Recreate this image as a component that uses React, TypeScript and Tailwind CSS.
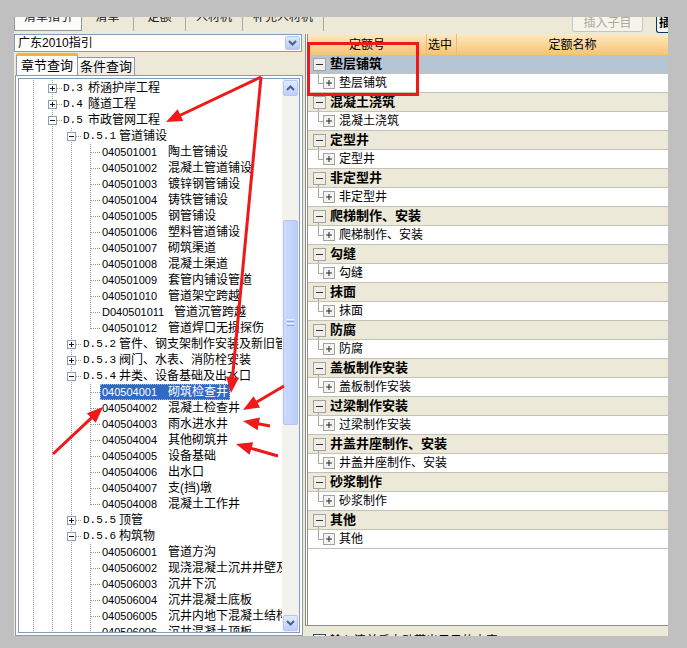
import React from "react";

type Box = "plus" | "minus";

type TreeRow =
  | { kind: "chapter"; prefix: string; name: string; box: Box }
  | { kind: "section"; prefix: string; name: string; box: Box }
  | { kind: "leaf"; code: string; name: string; last?: boolean; selected?: boolean };

const leaves = (items: [string, string][], lastEnds = true): TreeRow[] =>
  items.map(([code, name], i) => ({
    kind: "leaf",
    code,
    name,
    last: lastEnds && i === items.length - 1,
  }));

const TREE: TreeRow[] = [
  { kind: "chapter", prefix: "D.3", name: "桥涵护岸工程", box: "plus" },
  { kind: "chapter", prefix: "D.4", name: "隧道工程", box: "plus" },
  { kind: "chapter", prefix: "D.5", name: "市政管网工程", box: "minus" },
  { kind: "section", prefix: "D.5.1", name: "管道铺设", box: "minus" },
  ...leaves([
    ["040501001", "陶土管铺设"],
    ["040501002", "混凝土管道铺设"],
    ["040501003", "镀锌钢管铺设"],
    ["040501004", "铸铁管铺设"],
    ["040501005", "钢管铺设"],
    ["040501006", "塑料管道铺设"],
    ["040501007", "砌筑渠道"],
    ["040501008", "混凝土渠道"],
    ["040501009", "套管内铺设管道"],
    ["040501010", "管道架空跨越"],
    ["D040501011", "管道沉管跨越"],
    ["040501012", "管道焊口无损探伤"],
  ]),
  { kind: "section", prefix: "D.5.2", name: "管件、钢支架制作安装及新旧管连接", box: "plus" },
  { kind: "section", prefix: "D.5.3", name: "阀门、水表、消防栓安装", box: "plus" },
  { kind: "section", prefix: "D.5.4", name: "井类、设备基础及出水口", box: "minus" },
  { kind: "leaf", code: "040504001", name: "砌筑检查井", selected: true },
  ...leaves([
    ["040504002", "混凝土检查井"],
    ["040504003", "雨水进水井"],
    ["040504004", "其他砌筑井"],
    ["040504005", "设备基础"],
    ["040504006", "出水口"],
    ["040504007", "支(挡)墩"],
    ["040504008", "混凝土工作井"],
  ]),
  { kind: "section", prefix: "D.5.5", name: "顶管", box: "plus" },
  { kind: "section", prefix: "D.5.6", name: "构筑物", box: "minus" },
  ...leaves(
    [
      ["040506001", "管道方沟"],
      ["040506002", "现浇混凝土沉井井壁及隔墙"],
      ["040506003", "沉井下沉"],
      ["040506004", "沉井混凝土底板"],
      ["040506005", "沉井内地下混凝土结构"],
      ["040506006", "沉井混凝土顶板"],
    ],
    false
  ),
];

const GROUPS = [
  "垫层铺筑",
  "混凝土浇筑",
  "定型井",
  "非定型井",
  "爬梯制作、安装",
  "勾缝",
  "抹面",
  "防腐",
  "盖板制作安装",
  "过梁制作安装",
  "井盖井座制作、安装",
  "砂浆制作",
  "其他",
];

const TOP_TABS = [
  { label: "清单指引", w: "w-[68px]" },
  { label: "清单", w: "w-[52px]" },
  { label: "定额", w: "w-[52px]" },
  { label: "人材机", w: "w-[57px]" },
  { label: "补充人材机", w: "w-[81px]" },
];

// red annotation arrows: [fromX, fromY, tipX, tipY]
const ARROWS: [number, number, number, number][] = [
  [261, 77, 166, 122],
  [261, 77, 231, 393],
  [284, 386, 243, 410],
  [270, 426, 243, 421],
  [278, 456, 236, 444],
  [53, 454, 103, 407],
];

// one 19x16 cell of the tree's dotted guide lines
const Guide = ({
  line = "full",
  branch = false,
  box,
}: {
  line?: "full" | "half";
  branch?: boolean;
  box?: Box;
}) => (
  <svg width="19" height="16" className="block shrink-0">
    <line
      x1="9.5"
      y1="0"
      x2="9.5"
      y2={line === "full" ? 16 : 9}
      stroke="#9a9a9a"
      strokeDasharray="1 1"
    />
    {branch && (
      <line x1="10" y1="8.5" x2="19" y2="8.5" stroke="#9a9a9a" strokeDasharray="1 1" />
    )}
    {box && (
      <>
        <rect x="5.5" y="4.5" width="8" height="8" fill="#fff" stroke="#8a9bb0" />
        <line x1="7" y1="8.5" x2="12" y2="8.5" stroke="#1a1a1a" />
        {box === "plus" && <line x1="9.5" y1="6" x2="9.5" y2="11" stroke="#1a1a1a" />}
      </>
    )}
  </svg>
);

const Chevron = ({ up = false }: { up?: boolean }) => (
  <svg width="9" height="6" viewBox="0 0 9 6">
    <polyline
      points={up ? "1,5 4.5,1.5 8,5" : "1,1 4.5,4.5 8,1"}
      fill="none"
      stroke="#4d6185"
      strokeWidth="2"
    />
  </svg>
);

const TreeLine = ({ row }: { row: TreeRow }) => {
  if (row.kind === "chapter") {
    return (
      <div className="flex h-[16px] items-center whitespace-nowrap">
        <Guide />
        <Guide branch box={row.box} />
        <span className="flex h-[16px] items-center px-[1px]">
          <span className="w-[25px] font-['Liberation_Mono'] text-[11px]">{row.prefix}</span>
          <span>{row.name}</span>
        </span>
      </div>
    );
  }
  if (row.kind === "section") {
    return (
      <div className="flex h-[16px] items-center whitespace-nowrap">
        <Guide />
        <Guide />
        <Guide branch box={row.box} />
        <span className="flex h-[16px] items-center px-[2px]">
          <span className="w-[36px] font-['Liberation_Mono'] text-[11px]">{row.prefix}</span>
          <span>{row.name}</span>
        </span>
      </div>
    );
  }
  return (
    <div className="flex h-[16px] items-center whitespace-nowrap">
      <Guide />
      <Guide />
      <Guide />
      <Guide branch line={row.last ? "half" : "full"} />
      <span
        className={`flex h-[16px] items-center px-[2px] ${
          row.selected ? "bg-[#316ac5] text-white outline-1 outline-dotted outline-[#9fb6e0] -outline-offset-1" : ""
        }`}
      >
        <span className={`${row.code.length > 9 ? "w-[72px]" : "w-[66px]"} text-[11px]`}>
          {row.code}
        </span>
        <span>{row.name}</span>
      </span>
    </div>
  );
};

const Arrows = () => (
  <svg
    width="687"
    height="648"
    className="pointer-events-none absolute left-0 top-0"
  >
    <rect x="308.5" y="43.5" width="109" height="51" fill="none" stroke="#f01818" strokeWidth="3" />
    {ARROWS.map(([x1, y1, x2, y2], i) => {
      const dx = x2 - x1;
      const dy = y2 - y1;
      const len = Math.hypot(dx, dy);
      const ux = dx / len;
      const uy = dy / len;
      const bx = x2 - ux * 16;
      const by = y2 - uy * 16;
      const pts = `${x2},${y2} ${bx - uy * 6.5},${by + ux * 6.5} ${bx + uy * 6.5},${by - ux * 6.5}`;
      return (
        <g key={i}>
          <line x1={x1} y1={y1} x2={bx + ux * 2} y2={by + uy * 2} stroke="#f01818" strokeWidth="3" />
          <polygon points={pts} fill="#f01818" />
        </g>
      );
    })}
  </svg>
);

export default function App() {
  return (
    <div className="relative h-[648px] w-[687px] overflow-hidden bg-[#c0c0c0] pl-[14px] pt-[17px] font-['Liberation_Sans','Noto_Sans_CJK_SC',sans-serif] text-[12px] text-black">
      <div className="flex h-[619px] w-[654px] flex-col overflow-hidden bg-[#ece9d8]">
        {/* TOP TABS, cut off by the window edge */}
        <div className="h-[17px] shrink-0 overflow-hidden">
          <div className="-mt-[14px] flex h-[28px] items-stretch">
            {TOP_TABS.map((tab, i) => (
              <div
                key={tab.label}
                className={`${tab.w} flex items-center justify-center text-[12px] text-[#222] ${
                  i === 0
                    ? "border border-t-0 border-[#919b9c] bg-[#fbfbf8]"
                    : "border-r border-[#aca899]"
                }`}
              >
                {tab.label}
              </div>
            ))}
            <div className="flex-1" />
            <div className="mr-[13px] mt-[14px] flex h-[15px] w-[71px] items-start justify-center overflow-hidden rounded-b-[3px] border border-t-0 border-[#c9c7ba] bg-[#f5f4ea] text-[#aca899]">
              <span className="-mt-[3px]">插入子目</span>
            </div>
            <div className="mt-[14px] flex h-[16px] w-[12px] items-start overflow-hidden rounded-bl-[3px] border border-r-0 border-t-0 border-[#003c74] bg-[#f7f7f2] pl-[2px] font-bold">
              <span className="-mt-[3px]">插</span>
            </div>
          </div>
        </div>

        <div className="flex h-[602px] gap-[2px] overflow-hidden">
          {/* LEFT: GUIDE TREE */}
          <div className="flex w-[289px] shrink-0 flex-col">
            <div className="flex h-[18px] w-[288px] shrink-0 items-center border border-[#7f9db9] bg-white">
              <span className="flex-1 pl-[3px] text-[12px]">广东2010指引</span>
              <div className="mr-[1px] flex h-[14px] w-[15px] items-center justify-center rounded-[2px] border border-[#b5c7f2] bg-linear-to-b from-[#dde7fe] to-[#b6c9f6]">
                <Chevron />
              </div>
            </div>
            <div className="flex h-[23px] shrink-0 items-end pl-[2px]">
              <div className="flex h-[22px] w-[62px] items-center justify-center rounded-t-[2px] border border-b-0 border-[#919b9c] border-t-[3px] border-t-[#f3b33d] bg-[#fcfcfe] text-[13px]">
                章节查询
              </div>
              <div className="flex h-[18px] w-[57px] items-center justify-center border border-b-0 border-l-0 border-[#919b9c] bg-linear-to-b from-[#ffffff] to-[#ecebe5] text-[13px]">
                条件查询
              </div>
            </div>
            <div className="ml-[1px] flex h-[561px] w-[288px] shrink-0 border border-[#919b9c] bg-[#fcfcfe] p-[2px]">
              <div className="flex w-[282px] overflow-hidden border border-[#7f9db9] bg-white">
                <div className="w-[263px] shrink-0 overflow-hidden pl-[5px] pt-[1px]">
                  {TREE.map((row, i) => (
                    <TreeLine key={i} row={row} />
                  ))}
                </div>
                <div className="flex w-[17px] shrink-0 flex-col bg-[#f3f2ec] px-[1px] py-[1px]">
                  <div className="flex h-[16px] shrink-0 items-center justify-center rounded-[2px] border border-[#b7c8f2] bg-linear-to-b from-[#e3ebfe] to-[#bccefa]">
                    <Chevron up />
                  </div>
                  <div className="mt-[124px] flex h-[205px] shrink-0 flex-col items-center justify-center gap-[1px] rounded-[2px] border border-[#b2c5f3] bg-linear-to-r from-[#cbdafd] to-[#bccdf8]">
                    <div className="h-px w-[7px] bg-[#eef3ff]" />
                    <div className="h-px w-[7px] bg-[#8ea8e3]" />
                    <div className="h-px w-[7px] bg-[#eef3ff]" />
                    <div className="h-px w-[7px] bg-[#8ea8e3]" />
                  </div>
                  <div className="flex-1" />
                  <div className="flex h-[16px] shrink-0 items-center justify-center rounded-[2px] border border-[#b7c8f2] bg-linear-to-b from-[#e3ebfe] to-[#bccefa]">
                    <Chevron />
                  </div>
                </div>
              </div>
            </div>
          </div>

          {/* RIGHT: NORM TABLE */}
          <div className="flex w-[363px] shrink-0 flex-col">
            <div className="flex h-[592px] shrink-0 flex-col border-b border-l-[3px] border-double border-[#8e8e8e] bg-white">
              <div className="flex h-[21px] bg-linear-to-b from-[#fde9c2] to-[#f6c46f] text-[12px]">
                <div className="flex w-[119px] items-center justify-center border-r border-[#e9bc73]">
                  定额号
                </div>
                <div className="flex w-[30px] items-center border-r border-[#e9bc73] pl-[1px]">
                  选中
                </div>
                <div className="flex flex-1 items-center justify-center pl-[20px]">定额名称</div>
              </div>
              {GROUPS.map((g, i) => (
                <React.Fragment key={g}>
                  <div
                    className={`flex h-[19px] items-center border-b border-[#c4c2b6] ${
                      i === 0 ? "bg-[#b6c5d4]" : "bg-[#ece9d8]"
                    }`}
                  >
                    <svg width="22" height="18" className="block shrink-0">
                      <rect x="5.5" y="3.5" width="12" height="12" fill="#efeee8" stroke="#a3a29c" />
                      <line x1="8" y1="9.5" x2="15" y2="9.5" stroke="#333" />
                      <line x1="10.5" y1="16" x2="10.5" y2="18" stroke="#a5a5a5" />
                    </svg>
                    <span className="text-[13px] font-bold">{g}</span>
                  </div>
                  <div className="flex h-[19px] items-center border-b border-[#c4c2b6] bg-white">
                    <svg width="31" height="18" className="block shrink-0">
                      <line x1="10.5" y1="0" x2="10.5" y2="9.5" stroke="#a5a5a5" />
                      <line x1="10.5" y1="9.5" x2="15" y2="9.5" stroke="#a5a5a5" />
                      <rect x="15.5" y="3.5" width="11" height="11" fill="#f3f3ef" stroke="#a3a29c" />
                      <line x1="18" y1="9" x2="24" y2="9" stroke="#222" />
                      <line x1="21" y1="6" x2="21" y2="12" stroke="#222" />
                    </svg>
                    <span className="text-[12px]">{g}</span>
                  </div>
                </React.Fragment>
              ))}
            </div>
            <div className="flex h-[10px] items-start gap-[4px] overflow-hidden pl-[8px] pt-[8px] text-[12px]">
              <div className="h-[13px] w-[13px] shrink-0 border border-[#1c5180] bg-white" />
              <span className="-mt-[2px]">输入清单后自动带出子目的内容</span>
            </div>
          </div>
        </div>
      </div>
      <Arrows />
    </div>
  );
}
